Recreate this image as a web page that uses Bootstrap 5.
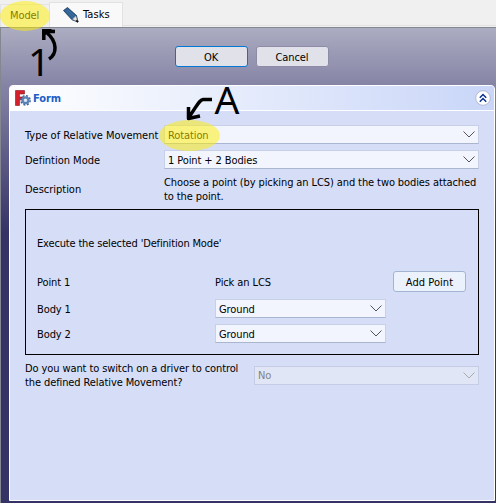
<!DOCTYPE html>
<html lang="en">
<head>
<meta charset="utf-8">
<title>Tasks</title>
<link href="https://cdn.jsdelivr.net/npm/bootstrap@5.3.0/dist/css/bootstrap.min.css" rel="stylesheet">
<style>
body{width:496px;height:503px;overflow:hidden;background:#f0f0f0;color:#000;font:11px/14px "DejaVu Sans Condensed","DejaVu Sans",sans-serif;font-stretch:condensed;letter-spacing:-.1px;white-space:nowrap}
svg{display:block;flex:none}
.tabs{height:27px}
.tab-model{width:49px;height:23px;margin-top:4px;padding:4px 0 0 9px;background:#f0f0f0;border:1px solid #e3e3e3;border-width:1px 0 0 1px}
.tab-tasks{width:74px;height:25px;margin-top:2px;padding:0 0 1px 13px;background:#f9f9f9;border:1px solid #e2e2e2;border-bottom:0}
.tasks-t{margin-left:4px;padding-top:1px;letter-spacing:.1px}
.tab-end{width:373px;height:26px;border-bottom:1px solid #e2e2e2}
.panel{height:476px;border-left:1px solid #828790;border-top:1px solid #828790;padding:18px 0 0 8px;background:linear-gradient(#acacc2 0,#8583a5 58px,#353265 205px)}
.cmds{padding-right:2px}
.pbtn{width:73px;height:21px;padding:2px 0 0;border:1px solid #8d8ba6;border-radius:3px;background:#e1e1e9;font:inherit;letter-spacing:inherit;color:#000}
.pbtn.main{border-color:#0078d4}
.pbtn.add{background:#ebf2fc;border-color:#a3b4d3;letter-spacing:.05px}
.form-card{width:486px;height:416px;margin-top:18px;background:#d6ddf7;border:1px solid #fff;border-radius:4px 4px 0 0}
.form-head{height:25px;padding:0 3px 0 5px;border-bottom:1px solid #fff;background:linear-gradient(90deg,#fff,#c9d6f8);color:#215dc6;border-radius:3px 3px 0 0}
.form-t{margin-left:2px;padding-top:1px}
.form-body{padding:14px 15px 0 15px}
.rows{gap:6px}
.combo{height:19px;background:#f2f5fd;border:1px solid #c8d0e8;border-bottom-color:#aab5d0;padding:0 3px}
.combo span{padding-top:2px}
.combo.off{background:#e0e6f6;border-color:#c5cde4;color:#838383}
.combo path{fill:none;stroke:#555;stroke-width:1}
.combo.off path{stroke:#aaa}
.short{width:171px}
.lab{width:139px;flex:none;padding-top:2px;letter-spacing:-.02px}
.two-line{padding-top:1px;margin-bottom:-1px}
.ask{width:229px;flex:none}
.frame{height:146px;border:1px solid #000;padding:27px 12px 0 11px}
.exec{letter-spacing:-.16px}
.pt{margin:20px 0 7px}
.pick{padding-top:2px}
.lab2{width:178px;flex:none;padding-top:2px}
.marks{left:0;top:0;pointer-events:none}
.hand{font:39px "Noto Sans",sans-serif}
</style>
<script src="https://cdn.jsdelivr.net/npm/bootstrap@5.3.0/dist/js/bootstrap.bundle.min.js"></script>
</head>
<body class="position-relative">
<div class="tabs d-flex">
  <div class="tab-model">Model</div>
  <div class="tab-tasks d-flex align-items-center">
    <svg width="16" height="16" viewBox="0 0 16 16"><path d="M.5 3.500 4.500.5 13.500 8.500 15 15 9 12.800Z" fill="#2d5f91" stroke="#14365c" stroke-width=".8"/><path d="M3 3.500 11 11.500M4.500 2.500 12 9.500" stroke="#4f80b0" stroke-width=".7"/><path d="M9.500 12.300 12.800 9 14.800 14.800Z" fill="#e8e4dc" stroke="#999" stroke-width=".4"/><path d="M13.300 13.300 15 15" stroke="#111" stroke-width="1.800"/></svg>
    <span class="tasks-t">Tasks</span>
  </div>
  <div class="tab-end"></div>
</div>
<main class="panel">
  <div class="cmds d-flex justify-content-center gap-2">
    <button class="pbtn main">OK</button><button class="pbtn">Cancel</button>
  </div>
  <section class="form-card">
    <div class="form-head d-flex align-items-center">
      <svg width="16" height="16" viewBox="0 0 16 16"><path d="M.5.5H9.500V4H4.500V7H8V10H4.500V15.500H.5Z" fill="#d3202a" stroke="#8b1420" stroke-width=".6"/><circle cx="10.500" cy="10.300" r="4.600" fill="none" stroke="#3c669b" stroke-width="1.500" stroke-dasharray="2 1.610"/><circle cx="10.500" cy="10.300" r="2.900" fill="#dce8f7" stroke="#5a82b4" stroke-width="2.200"/></svg>
      <b class="form-t">Form</b>
      <svg class="ms-auto" width="16" height="16" viewBox="0 0 16 16"><circle cx="8" cy="8" r="7.300" fill="#fff" stroke="#b3bad2"/><path d="M4.800 7.700 8 4.500 11.200 7.700M4.800 11.700 8 8.500 11.200 11.700" fill="none" stroke="#0b318f" stroke-width="1.500"/></svg>
    </div>
    <div class="form-body rows d-flex flex-column">
      <div class="d-flex align-items-center"><div class="lab">Type of Relative Movement</div><div class="combo flex-fill d-flex align-items-center justify-content-between"><span>Rotation</span><svg width="12" height="7"><path d="M.5.5 6 6 11.500.5"/></svg></div></div>
      <div class="d-flex align-items-center"><div class="lab">Defintion Mode</div><div class="combo flex-fill d-flex align-items-center justify-content-between"><span>1 Point + 2 Bodies</span><svg width="12" height="7"><path d="M.5.5 6 6 11.500.5"/></svg></div></div>
      <div class="d-flex align-items-center"><div class="lab">Description</div><div class="two-line">Choose a point (by picking an LCS) and the two bodies attached<br>to the point.</div></div>
      <div class="frame">
        <div class="exec">Execute the selected 'Definition Mode'</div>
        <div class="pt d-flex align-items-center"><div class="lab2">Point 1</div><div class="pick">Pick an LCS</div><button class="pbtn add ms-auto">Add Point</button></div>
        <div class="rows d-flex flex-column">
          <div class="d-flex align-items-center"><div class="lab2">Body 1</div><div class="combo short d-flex align-items-center justify-content-between"><span>Ground</span><svg width="12" height="7"><path d="M.5.5 6 6 11.500.5"/></svg></div></div>
          <div class="d-flex align-items-center"><div class="lab2">Body 2</div><div class="combo short d-flex align-items-center justify-content-between"><span>Ground</span><svg width="12" height="7"><path d="M.5.5 6 6 11.500.5"/></svg></div></div>
        </div>
      </div>
      <div class="d-flex align-items-center"><div class="ask two-line">Do you want to switch on a driver to control<br>the defined Relative Movement?</div><div class="combo off flex-fill d-flex align-items-center justify-content-between"><span>No</span><svg width="12" height="7"><path d="M.5.5 6 6 11.500.5"/></svg></div></div>
    </div>
  </section>
</main>
<svg class="marks position-absolute" width="496" height="503">
  <g fill="#fff000" fill-opacity=".5"><ellipse cx="25" cy="16" rx="25" ry="15"/><ellipse cx="189.500" cy="135.500" rx="30.500" ry="15.500"/></g>
  <g fill="none" stroke="#000" stroke-width="3.500" stroke-linejoin="round">
    <path d="M49 59C57 54 58 42 46 32M43.800 40V31L55 31.500"/>
    <path d="M212 99.500H203C199 100 197 106 189 117M188.500 107V118.500L200 116"/>
  </g>
  <path d="M42 29H52L43 37ZM187 112 194 117 187 120Z"/>
  <g class="hand"><text x="28" y="76">1</text><text x="214.500" y="114">A</text></g>
</svg>
</body>
</html>
